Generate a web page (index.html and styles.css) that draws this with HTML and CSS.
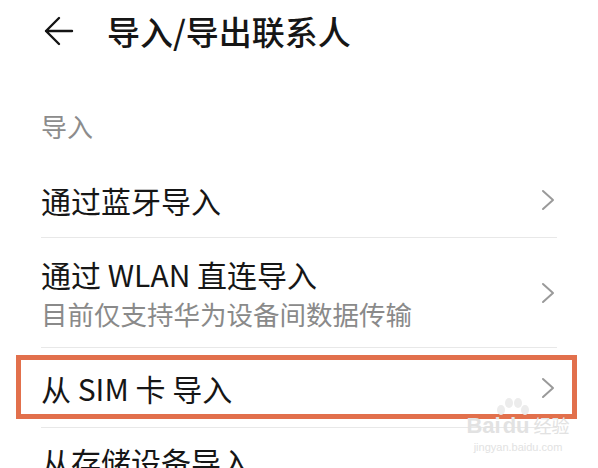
FILE: index.html
```html
<!DOCTYPE html>
<html lang="zh-CN">
<head>
    <meta charset="UTF-8">
    <meta name="viewport" content="width=device-width, initial-scale=1.0">
    <title>导入/导出联系人</title>
    <link rel="stylesheet" href="styles.css">
</head>
<body>

<div class="header">
    <svg class="back" width="30" height="30" viewBox="0 0 30 30">
        <path d="M2 15 H28 M15 2 L2 15 L15 28" fill="none" stroke="#141414" stroke-width="2.4" stroke-linecap="round" stroke-linejoin="round"/>
    </svg>
    <h1>导入/导出联系人</h1>
</div>

<div class="section-label">导入</div>

<div class="list">
    <div class="row row-single">
        <div class="row-text">
            <div class="row-title">通过蓝牙导入</div>
        </div>
        <svg class="chevron" width="14" height="22" viewBox="0 0 14 22"><path d="M2 2 L12 11 L2 20" fill="none" stroke="#9a9a9a" stroke-width="2" stroke-linecap="round" stroke-linejoin="round"/></svg>
    </div>
    <div class="row row-double">
        <div class="row-text">
            <div class="row-title">通过 WLAN 直连导入</div>
            <div class="row-sub">目前仅支持华为设备间数据传输</div>
        </div>
        <svg class="chevron" width="14" height="22" viewBox="0 0 14 22"><path d="M2 2 L12 11 L2 20" fill="none" stroke="#9a9a9a" stroke-width="2" stroke-linecap="round" stroke-linejoin="round"/></svg>
    </div>
    <div class="row row-single highlighted">
        <div class="row-text">
            <div class="row-title">从 SIM 卡 导入</div>
        </div>
        <svg class="chevron" width="14" height="22" viewBox="0 0 14 22"><path d="M2 2 L12 11 L2 20" fill="none" stroke="#9a9a9a" stroke-width="2" stroke-linecap="round" stroke-linejoin="round"/></svg>
        <div class="mark"></div>
    </div>
    <div class="row row-last">
        <div class="row-text">
            <div class="row-title">从存储设备导入</div>
        </div>
    </div>
</div>

<!-- watermark from the source screenshot -->
<div class="watermark">
    <svg class="paw" width="40" height="30" viewBox="0 0 40 30">
        <g fill="#ececec">
            <ellipse cx="9" cy="12" rx="4" ry="5"/>
            <ellipse cx="17" cy="5" rx="4" ry="5"/>
            <ellipse cx="26" cy="5" rx="4" ry="5"/>
            <ellipse cx="33" cy="12" rx="4" ry="5"/>
        </g>
    </svg>
    <div class="wm-logo"><span>Bai</span><span class="wm-du">du</span><span class="wm-cn">经验</span></div>
    <div class="wm-url">jingyan.baidu.com</div>
</div>

</body>
</html>
```

FILE: styles.css
```css
body {
    font-family: "Noto Sans CJK SC", "Noto Sans", sans-serif;
    margin: 0;
    padding: 0;
    background-color: #ffffff;
    color: #161616;
    width: 598px;
    height: 468px;
    overflow: hidden;
    position: relative;
}
.header {
    display: flex;
    align-items: center;
    height: 62px;
    padding-left: 44px;
}
.header .back {
    margin-right: 33px;
}
.header h1 {
    margin: 0;
    font-size: 33px;
    font-weight: 500;
    line-height: 40px;
}
.section-label {
    padding: 46px 41px 18px;
    font-size: 26px;
    line-height: 36px;
    color: #8c8c8c;
}
.list {
    margin: 0 41px;
}
.row {
    display: flex;
    align-items: center;
    justify-content: space-between;
    border-bottom: 1px solid #e8e8e8;
    position: relative;
}
.row-single {
    height: 75px;
}
.highlighted {
    height: 79px;
}
.row-double {
    height: 109px;
}
.row-last {
    height: 66px;
    border-bottom: none;
}
.row-text {
    display: flex;
    flex-direction: column;
    gap: 4px;
}
.row-title {
    font-size: 30px;
    line-height: 38px;
}
.row-sub {
    font-size: 26.5px;
    line-height: 34px;
    color: #8a8a8a;
}
.chevron {
    margin-right: 2px;
}
.mark {
    position: absolute;
    left: -25px;
    right: -20px;
    top: 7px;
    bottom: 8px;
    border: 5px solid #e2704c;
}
.watermark {
    position: absolute;
    left: 462px;
    top: 398px;
    width: 112px;
    text-align: center;
    color: #e2e2e2;
    font-family: "Liberation Sans", Arial, sans-serif;
}
.watermark .paw {
    position: absolute;
    left: 30px;
    top: 0;
}
.wm-logo {
    padding-top: 14px;
    font-size: 22px;
    font-weight: bold;
    line-height: 26px;
}
.wm-du {
    margin-left: 2px;
}
.wm-cn {
    margin-left: 4px;
    font-family: "Noto Sans CJK SC", sans-serif;
    font-size: 18px;
    font-weight: normal;
}
.wm-url {
    font-size: 11px;
    line-height: 16px;
}
```
